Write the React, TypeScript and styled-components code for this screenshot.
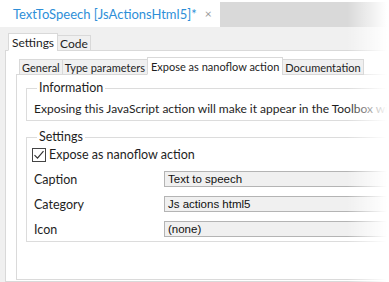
import React from 'react'
import styled, { createGlobalStyle } from 'styled-components'

const GlobalStyle = createGlobalStyle`
  body {
    margin: 0;
    background: #f0f0f0;
  }
`

const UI_FONT = `'Lato', 'Noto Sans', sans-serif`
const FIELD_FONT = `'Liberation Sans', Arial, sans-serif`

const Window = styled.div`
  position: relative;
  width: 389px;
  height: 282px;
  overflow: hidden;
  background: #f0f0f0;
  font-family: ${UI_FONT};
  font-size: 12px;
  color: #1e1e1e;
`

const DocTabBar = styled.div`
  display: flex;
  height: 25px;
  border-top: 2px solid #ffffff;
  background: #d9d9d9;
`

const DocTab = styled.div`
  display: flex;
  align-items: center;
  gap: 8px;
  margin-top: -2px;
  padding: 0 8px 0 13px;
  height: 27px;
  background: #ffffff;
`

const DocTitle = styled.span`
  font-size: 13px;
  color: #2e8fd8;
`

const CloseMark = styled.span`
  font-size: 12px;
  color: #9a9a9a;
`

const TabStrip = styled.div<{ $indent: number }>`
  display: flex;
  align-items: flex-end;
  padding-left: ${({ $indent }) => $indent}px;
  position: relative;
  z-index: 1;
`

const Tab = styled.div<{ $active?: boolean; $h: number; $size?: number }>`
  display: flex;
  align-items: center;
  height: ${({ $h }) => $h}px;
  padding: 0 ${({ $active }) => ($active ? 3 : 2)}px;
  background: ${({ $active }) => ($active ? '#ffffff' : '#f0f0f0')};
  border: 1px solid #d9d9d9;
  border-bottom: ${({ $active }) => ($active ? '1px solid #ffffff' : '1px solid #d9d9d9')};
  margin-bottom: -1px;
  margin-left: -1px;
  box-sizing: border-box;
  white-space: nowrap;
  font-size: ${({ $size }) => $size ?? 12}px;
`

const Body = styled.div`
  padding-top: 6px;
`

const OuterPage = styled.div`
  margin-left: 5px;
  width: 420px;
  height: 232px;
  background: #ffffff;
  border: 1px solid #d9d9d9;
  padding-top: 6px;
  box-sizing: border-box;
`

const InnerPage = styled.div`
  margin-left: 10px;
  width: 420px;
  height: 206px;
  background: #ffffff;
  border: 1px solid #dadada;
  box-sizing: border-box;
  padding: 6px 0 0 9px;
  display: flex;
  flex-direction: column;
  gap: 9px;
`

const GroupBox = styled.fieldset<{ $h: number }>`
  margin: 0;
  padding: 0 0 0 7px;
  width: 420px;
  height: ${({ $h }) => $h}px;
  box-sizing: border-box;
  border: 1px solid #dcdcdc;
  display: flex;
  flex-direction: column;
`

const Legend = styled.legend`
  padding: 0 2px;
  margin-left: 3px;
  font-size: 12.5px;
  line-height: 14px;
`

const InfoText = styled.div`
  padding-top: 6px;
  white-space: nowrap;
  font-size: 12px;
`

const CheckRow = styled.label`
  display: flex;
  align-items: center;
  gap: 3px;
  margin-top: 3px;
  margin-left: -2px;
  font-size: 12.5px;
`

const FormRow = styled.div`
  display: flex;
  align-items: center;
  height: 16px;
  margin-top: 9px;
`

const FieldLabel = styled.span`
  width: 130px;
  font-size: 12.5px;
`

const FieldBox = styled.div`
  flex: 1;
  height: 16px;
  box-sizing: border-box;
  background: #f0f0f0;
  border: 1px solid #b4b4b4;
  border-right: none;
  padding-left: 3px;
  font-family: ${FIELD_FONT};
  font-size: 11.5px;
  line-height: 14px;
  color: #111;
`

const EdgeFade = styled.div`
  position: absolute;
  top: 0;
  right: 0;
  width: 42px;
  height: 100%;
  pointer-events: none;
  background: linear-gradient(to right, rgba(255, 255, 255, 0), #ffffff 95%);
`

function CheckBox() {
  return (
    <svg width="14" height="14" viewBox="0 0 14 14">
      <rect x="0.5" y="0.5" width="13" height="13" fill="#ffffff" stroke="#444" />
      <path d="M2.5 7.2 L5.5 10.2 L11.5 3.2" fill="none" stroke="#333" strokeWidth="1.2" />
    </svg>
  )
}

const fields = [
  { label: 'Caption', value: 'Text to speech' },
  { label: 'Category', value: 'Js actions html5' },
  { label: 'Icon', value: '(none)' },
]

export default function App() {
  return (
    <Window>
      <GlobalStyle />
      <DocTabBar>
        <DocTab>
          <DocTitle>TextToSpeech [JsActionsHtml5]*</DocTitle>
          <CloseMark>×</CloseMark>
        </DocTab>
      </DocTabBar>
      <Body>
        <TabStrip $indent={9}>
          <Tab $active $h={18}>Settings</Tab>
          <Tab $h={16}>Code</Tab>
        </TabStrip>
        <OuterPage>
          <TabStrip $indent={14}>
            <Tab $h={16} $size={11}>General</Tab>
            <Tab $h={16} $size={11}>Type parameters</Tab>
            <Tab $active $h={18} $size={11}>Expose as nanoflow action</Tab>
            <Tab $h={16} $size={11}>Documentation</Tab>
          </TabStrip>
          <InnerPage>
            <GroupBox $h={40}>
              <Legend>Information</Legend>
              <InfoText>Exposing this JavaScript action will make it appear in the Toolbox window</InfoText>
            </GroupBox>
            <GroupBox $h={112}>
              <Legend>Settings</Legend>
              <CheckRow>
                <CheckBox />
                Expose as nanoflow action
              </CheckRow>
              {fields.map((f) => (
                <FormRow key={f.label}>
                  <FieldLabel>{f.label}</FieldLabel>
                  <FieldBox>{f.value}</FieldBox>
                </FormRow>
              ))}
            </GroupBox>
          </InnerPage>
        </OuterPage>
      </Body>
      <EdgeFade />
    </Window>
  )
}
